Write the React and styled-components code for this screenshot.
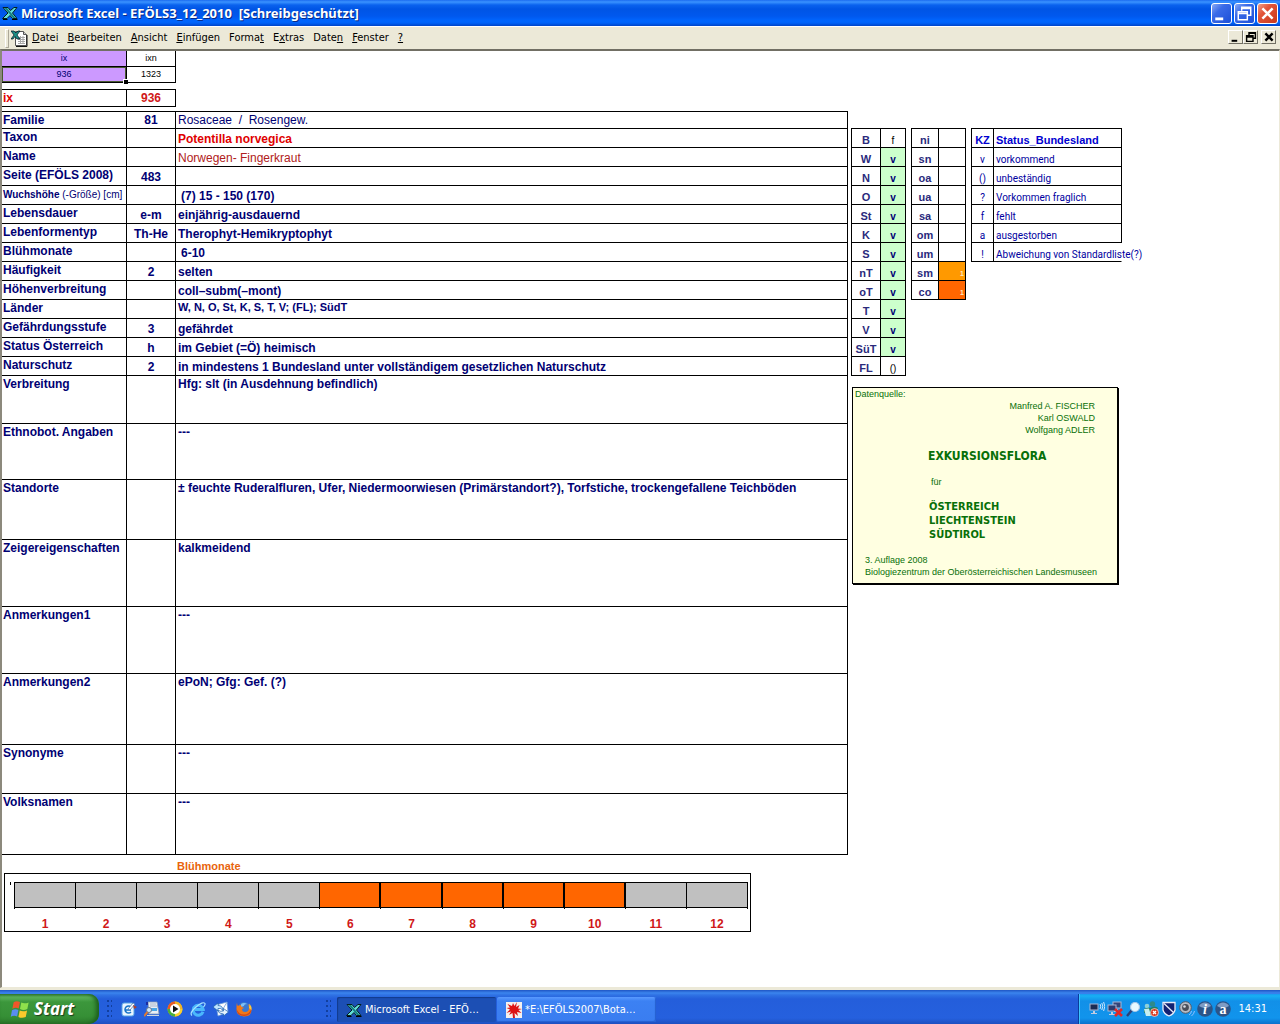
import React from "react";
import styled, { createGlobalStyle, css } from "styled-components";

const ui = `"DejaVu Sans Condensed", "DejaVu Sans", sans-serif`;
const sheet = `"Liberation Sans", Arial, sans-serif`;
const navy = "#000073";

const Global = createGlobalStyle`
  * { box-sizing: border-box; }
  body { margin: 0; background: #fff; font-family: ${sheet}; }
  button { font: inherit; color: inherit; border: 0; padding: 0; background: none; cursor: default; }
  svg { display: block; flex: none; }
`;

const Desktop = styled.div`
  display: flex;
  flex-direction: column;
  min-height: 100vh;
  background: #ece9d8;
`;

/* ---------- window frame ---------- */
const TitleBar = styled.header`
  display: flex;
  align-items: center;
  gap: 3px;
  height: 26px;
  padding: 0 2px 0 2px;
  color: #fff;
  background: linear-gradient(#1c6cf0 0, #3a93ff 2px, #0a62ee 5px, #0055e5 9px, #0058ee 16px, #0066ff 21px, #0062f8 23px, #0044c8 26px);
`;
const Title = styled.h1`
  flex: 1;
  margin: 0;
  font: bold 13px/24px "Noto Sans", "Open Sans", sans-serif;
  white-space: pre;
  text-shadow: 1px 1px #0a2a86;
`;
const WinButtons = styled.div`
  display: flex;
  gap: 2px;
`;
const WinButton = styled.button`
  display: grid;
  place-items: center;
  width: 21px;
  height: 21px;
  border: 1px solid #fff;
  border-radius: 3px;
  background: ${(p) =>
    p.$close
      ? "linear-gradient(135deg, #f0a088, #e2553a 35%, #c8381a)"
      : "linear-gradient(135deg, #8aaaf5, #3a6be8 35%, #1c4fd8)"};
`;

const MenuBar = styled.nav`
  display: flex;
  align-items: center;
  height: 23px;
  padding: 0 4px 0 5px;
  background: #ece9d8;
  border-top: 1px solid #fff;
`;
const Grip = styled.span`
  width: 4px;
  height: 19px;
  margin-right: 2px;
  border: 1px solid #aca899;
  border-top-color: #fff;
  border-left-color: #fff;
`;
const MenuList = styled.div`
  display: flex;
  flex: 1;
  gap: 9px;
  padding-left: 4px;
`;
const MenuItem = styled.button`
  font: 11px/20px ${ui};
  color: #000;
`;
const DocButtons = styled.div`
  display: flex;
  padding-bottom: 2px;
`;
const DocButton = styled.button`
  display: grid;
  place-items: center;
  width: 15px;
  height: 14px;
  margin-left: ${(p) => (p.$apart ? 3 : 0)}px;
  background: #ece9d8;
  border: 1px solid;
  border-color: #fff #716f64 #716f64 #fff;
`;

/* ---------- worksheet ---------- */
const Sheet = styled.main`
  flex: 1;
  display: flex;
  align-items: flex-start;
  gap: 3px;
  background: #fff;
  border: solid;
  border-width: 2px 1px 1px 2px;
  border-color: #716f64 #ece9d8 #ece9d8 #8c897c;
  margin-bottom: 2px;
`;
const Left = styled.div`
  display: flex;
  flex-direction: column;
  align-items: flex-start;
`;
const Grid = styled.table`
  table-layout: fixed;
  border-collapse: separate;
  border-spacing: 0;
  width: ${(p) => p.$w}px;
  margin-top: ${(p) => p.$gap || 0}px;
  border-top: ${(p) => (p.$open ? 0 : 1)}px solid #000;
  border-left: ${(p) => (p.$framed ? 1 : 0)}px solid #000;
  color: ${navy};
  font: bold 12px/15px ${sheet};

  th, td {
    padding: 0 2px;
    border: solid #000;
    border-width: 0 1px 1px 0;
    text-align: left;
    vertical-align: top;
    white-space: pre;
  }
`;
const Row = styled.tr`
  height: ${(p) => p.$h}px;
`;
const Label = styled.th`
  && { font-size: ${(p) => (p.$small ? 10 : 12)}px; padding: 1px 0 0 1px; ${(p) => p.$red && "color: #e00000;"} }
`;
const Plain = styled.span`
  font-weight: normal;
`;
const Code = styled.td`
  && { text-align: center; vertical-align: bottom; ${(p) => p.$red && "color: #d01818;"} }
`;
const looks = {
  plain: css`font-weight: normal;`,
  taxon: css`color: #e00000;`,
  name: css`color: #b02020; font-weight: normal;`,
  small: css`font-size: 11px;`,
};
const Value = styled.td`
  && {
    vertical-align: ${(p) => (p.$top ? "top" : "bottom")};
    padding-top: ${(p) => (p.$tall ? 1 : 0)}px;
    padding-left: ${(p) => (p.$indent ? 5 : 2)}px;
    ${(p) => looks[p.$look]}
  }
`;
const HeadCell = styled.td`
  && {
    height: 16px;
    font: 9px/15px ${sheet};
    text-align: center;
    color: ${(p) => (p.$lilac ? navy : "#000")};
    background: ${(p) => (p.$lilac ? "#cc99ff" : "#fff")};
    ${(p) => p.$selected && "box-shadow: inset 0 0 0 1px #4a5a32; position: relative;"}
  }
  ${(p) =>
    p.$selected &&
    css`
      &::after {
        content: "";
        position: absolute;
        right: -2px;
        bottom: -2px;
        width: 4px;
        height: 4px;
        background: #000;
        border: solid #fff;
        border-width: 1px 0 0 1px;
      }
    `}
`;

/* ---------- flowering months ---------- */
const ChartTitle = styled.h2`
  margin: 4px 0 0 175px;
  font: bold 11px/14px ${sheet};
  color: #e8640c;
`;
const Chart = styled.section`
  display: flex;
  width: 747px;
  height: 59px;
  margin: 0 0 20px 2px;
  padding: 8px 2px 0 5px;
  border: 1px solid #000;
`;
const AxisMark = styled.span`
  width: 1px;
  height: 3px;
  margin-right: 3px;
  background: #000;
`;
const Months = styled.ol`
  flex: 1;
  display: grid;
  grid-template-columns: repeat(12, 1fr);
  height: 27px;
  margin: 0;
  padding: 0;
  list-style: none;
  border-right: 1px solid #000;
`;
const Month = styled.li`
  height: 27px;
  border-left: 1px solid #000;
  color: #d01818;
  font: bold 12px/15px ${sheet};
  text-align: center;
  &::before {
    content: "";
    display: block;
    height: 24px;
    margin-bottom: 9px;
    border: solid #000;
    border-width: 1px ${(p) => (p.$on ? 1 : 0)}px 1px 0;
    background: ${(p) => (p.$on ? "#ff6600" : "#c0c0c0")};
  }
`;

/* ---------- side tables ---------- */
const Side = styled.aside`
  display: flex;
  flex-direction: column;
  align-items: flex-start;
  padding-top: 77px;
`;
const SideTables = styled.div`
  display: flex;
  align-items: flex-start;
  gap: 5px;
`;
const Key = styled.th`
  && {
    font: bold 11px/13px ${sheet};
    text-align: center;
    vertical-align: bottom;
    color: #2a2a7c;
  }
`;
const Mark = styled.td`
  && {
    font: ${(p) => (p.$bg ? "bold" : "normal")} 10px/13px ${sheet};
    text-align: center;
    vertical-align: bottom;
    color: ${(p) => (p.$bg ? navy : "#000")};
    background: ${(p) => p.$bg || "#fff"};
  }
`;
const Heat = styled.td`
  && {
    font: bold 7px/12px ${sheet};
    text-align: right;
    vertical-align: bottom;
    padding: 0 1px;
    color: #ffe9c0;
    background: ${(p) => p.$bg || "#fff"};
  }
`;
const Legend = styled.td`
  && {
    font: ${(p) => (p.$head ? `bold 11px/13px ${sheet}` : `10px/13px Roboto, ${sheet}`)};
    color: ${(p) => (p.$head ? "#0000d0" : "#0000a0")};
    text-align: ${(p) => (p.$mid ? "center" : "left")};
    vertical-align: bottom;
    ${(p) => p.$spill && "border-right-color: transparent;"}
  }
`;

const Source = styled.section`
  display: flex;
  flex-direction: column;
  width: 266px;
  margin: 11px 0 0 1px;
  padding: 0 2px 5px;
  border: 1px solid #000;
  box-shadow: 1px 1px #000;
  background: #ffffe1;
  color: #087008;
  font: 9px/12px ${sheet};
  p { margin: 0; }
`;
const Authors = styled.p`
  text-align: right;
  padding-right: 20px;
`;
const Book = styled.h2`
  margin: 13px 0 12px 73px;
  font: bold 12px/15px ${ui};
`;
const For = styled.p`
  padding: 0 0 12px 76px;
`;
const Lands = styled.p`
  padding: 0 0 12px 74px;
  font: bold 11px/14px ${ui};
`;
const Edition = styled.p`
  padding-left: 10px;
  white-space: nowrap;
`;

/* ---------- taskbar ---------- */
const TaskBar = styled.footer`
  display: flex;
  height: 34px;
  padding-top: 4px;
  color: #fff;
  background: linear-gradient(#1f55c4 0, #3b85ee 3px, #2f72e4 5px, #245edb 9px, #2560de 28px, #1d4fc0 34px);
  font: 11px/16px ${ui};
`;
const Start = styled.button`
  display: flex;
  align-items: center;
  gap: 3px;
  width: 99px;
  padding-left: 10px;
  border-radius: 0 10px 10px 0;
  background: linear-gradient(#3f8a3f 0, #5cb35c 3px, #3c973c 8px, #369036 22px, #2c7a2c 30px);
  box-shadow: inset -3px 0 4px #1d5e1d;
  font: italic bold 17px/24px "Noto Sans", "Open Sans", sans-serif;
  color: #fff;
  text-shadow: 1px 1px 1px #1a3d1a;
`;
const Dots = styled.span`
  width: 5px;
  margin: 6px ${(p) => p.$mr}px 4px ${(p) => p.$ml}px;
  background: radial-gradient(circle at 1px 1px, #123f9e 1px, transparent 1px) 0 0 / 4px 5px;
`;
const Quick = styled.div`
  display: flex;
  align-items: center;
  gap: 7px;
  width: 203px;
`;
const IconButton = styled.button`
  width: 16px;
  height: 16px;
`;
const Tasks = styled.div`
  flex: 1;
  display: flex;
  gap: 1px;
  padding: 3px 0 2px;
`;
const Task = styled.button`
  display: flex;
  align-items: center;
  gap: 3px;
  width: 159px;
  padding-left: 9px;
  border-radius: 2px;
  text-align: left;
  white-space: nowrap;
  background: ${(p) => (p.$active ? "#1c4fb4" : "linear-gradient(#5a9aff, #3c81f3 4px, #3a7df0)")};
  box-shadow: ${(p) => (p.$active ? "inset 1px 1px 1px #123a8c" : "inset -1px -1px 1px #2560d0")};
`;
const Tray = styled.div`
  display: flex;
  align-items: center;
  gap: 2px;
  padding: 0 13px 0 10px;
  border-left: 1px solid #0a3c9c;
  box-shadow: inset 1px 0 #3cc4ff;
  background: linear-gradient(#1a9af0 0, #18b0f4 2px, #1290e8 7px, #1194ec 24px, #0c70cc 30px);
`;
const Clock = styled.time`
  padding-left: 5px;
`;

/* ---------- icons ---------- */
const Icon = ({ children, size = 16 }) => (
  <svg width={size} height={size} viewBox="0 0 16 16" aria-hidden="true">
    {children}
  </svg>
);
const ExcelIcon = () => (
  <Icon>
    <path d="M1 2.500h5l2.500 3L12 2.500h3l-4.500 5.500 4.500 5.500h-4.500L8 10.500l-3 3H.500l5.500-5.500z" fill="#62dcd8" stroke="#04201f" />
    <path d="M2.500 3h2.500l8.500 10H11z" fill="#147f80" />
    <path d="M10 14h5.500v1H10zM1 14h4.500v1H1z" fill="#000" />
  </Icon>
);
const SheetDocIcon = () => (
  <svg width="17" height="17" viewBox="0 0 17 17" aria-hidden="true">
    <path d="M4.500 1.500h8l3 3v11h-11z" fill="#fff" stroke="#555" />
    <path d="M12.500 1.500v3h3" fill="#ccc" stroke="#555" />
    <path d="M7 7.500h7M7 9.500h7M7 11.500h7M7 13.500h7M9.500 6v8M12 6v8" stroke="#a8a8a8" />
    <path d="M16 5v11.500H5" fill="none" stroke="#111" />
    <path d="M0 1h3l2 2 2-2h2L6 5l3 4H6L4 6.500 2 9H0l3-4z" fill="#1b8f86" stroke="#012" strokeWidth=".7" />
  </svg>
);
const FlagIcon = () => (
  <Icon size={21}>
    <path d="M2.800 2.500Q5 1 7.600 2.300L6.600 7.300Q4.200 6 1.800 7.500z" fill="#f0562a" />
    <path d="M8.600 2.700Q11 4 14.200 2.600L13.200 7.700Q10.300 9 7.600 7.700z" fill="#8fe04c" />
    <path d="M1.500 8.600Q4 7 6.400 8.300L5.400 13.300Q3 12 .600 13.500z" fill="#5a8df0" />
    <path d="M7.400 8.800Q10 10.100 13 8.700L12 13.800Q9 15 6.400 13.700z" fill="#fbc92c" />
  </Icon>
);
const DesktopIcon = () => (
  <Icon>
    <rect x="1" y="2" width="12" height="13" rx="2" fill="#e9f5ff" stroke="#57a4e4" />
    <path d="M10 6a3.500 3.500 0 1 0 0 5M4 9h6" fill="none" stroke="#1673c8" strokeWidth="1.600" />
    <path d="M7 8l5-6 2 1-5 6z" fill="#fff" stroke="#3a6ea8" strokeWidth=".7" />
    <path d="M12 4l4 2-3 2z" fill="#b0402a" />
  </Icon>
);
const SearchDocIcon = () => (
  <Icon>
    <path d="M4 1h9l2 12H5z" fill="#e8eef6" stroke="#8b9db5" strokeWidth=".8" />
    <path d="M6 3h6M6 5h7" stroke="#a9b8cc" />
    <path d="M6 7h7v3H6z" fill="#4ba7e6" />
    <path d="M3 14h12v1H3z" fill="#ccd5e0" />
    <circle cx="5" cy="9" r="2.500" fill="#cfeaff" stroke="#6a7890" />
    <path d="M3.500 11L0 15" stroke="#e07a30" strokeWidth="2" />
    <path d="M2 1h2v3H2z" fill="#1a2ca0" />
  </Icon>
);
const PlayerIcon = () => (
  <Icon>
    <circle cx="8" cy="8" r="7.500" fill="#f5a81c" />
    <path d="M8 8V.500A7.500 7.500 0 0 0 .500 8z" fill="#e65a24" />
    <path d="M8 8H.500A7.500 7.500 0 0 0 8 15.500z" fill="#48b03c" />
    <path d="M8 8h7.500A7.500 7.500 0 0 1 8 15.500z" fill="#f8d030" />
    <path d="M8 8V.500A7.500 7.500 0 0 1 15.500 8z" fill="#f0b428" />
    <circle cx="8" cy="8" r="5" fill="#fff" />
    <path d="M6 4.500l5.500 3.500L6 11.500z" fill="#111" />
  </Icon>
);
const IeIcon = () => (
  <Icon>
    <path d="M13 10.800A5 5 0 1 1 13.200 8.500H5" fill="none" stroke="#4ab8fc" strokeWidth="3" />
    <path d="M2 14.500Q-1 12 6 6T15 2.500Q15.500 4 13.500 6" fill="none" stroke="#a8e2ff" strokeWidth="1.200" />
  </Icon>
);
const OutlookIcon = () => (
  <Icon>
    <path d="M3 4l11-3 1 10-10 4z" fill="#fff" stroke="#6a9bd8" strokeWidth=".8" />
    <path d="M3 4l7 4 4-7" fill="none" stroke="#8ab0e0" />
    <path d="M0 6l5-4v2.500q5 0 5 5-2-3-5-2V10z" fill="#bfe4ff" stroke="#155cab" strokeWidth=".7" />
    <path d="M15.500 11l-5 4v-2q-5 0-6-4 3 2 6 1V7.500z" fill="#e4f4ff" stroke="#155cab" strokeWidth=".7" />
  </Icon>
);
const FirefoxIcon = () => (
  <Icon>
    <circle cx="8" cy="7" r="6" fill="#3a78d0" />
    <path d="M5 3q3-2 6 0-3 0-3 2l-3 1z" fill="#7fc0f4" />
    <path d="M1 1.500q0 2.500 1 3.500 1-1 3-1-1 1 1 2l2 1-2 1q0 3 3 3 4 0 4-4 0-2-1-4 3 2 3.500 5Q16 15.500 8 15.500 0 15 .500 8 .300 4 1 1.500z" fill="#f07818" />
    <path d="M.500 8q2 5.500 7.500 5.500 5 0 7.500-5.500-.500 7-7.500 7Q1 15 .500 8z" fill="#d0481c" />
    <path d="M13.500 2.500q2.500 3 2 6.500L13 7z" fill="#fbc83a" />
  </Icon>
);
const SplatIcon = () => (
  <Icon>
    <path d="M0 0h16v16H0z" fill="#f4f0ee" />
    <path d="M6 4l-4.500-2L4 5.500.500 6 4 7.500.500 11 5 9.500 3 13l3.500-2L7 16h2l-.500-5 3.500 3-1-4 4.500 1-3-3L16 7l-4-.500L13.500 3 10 5l1-5-2.500 4L7 1z" fill="#dd1414" />
  </Icon>
);
const pc = (x, y, c = "#1c2c54") => (
  <>
    <rect x={x} y={y} width="8" height="6" fill={c} stroke="#aab6d4" strokeWidth="1" />
    <path d={`M${x + 3} ${y + 7}h2v2H${x + 3}zM${x + 1} ${y + 9}h6v1H${x + 1}z`} fill="#c3cbe0" />
  </>
);
const WirelessIcon = () => (
  <Icon>
    {pc(1, 3)}
    <path d="M11 3q1.500 2 0 5M12.800 2q2 3 0 7M14.600 1q2.500 4 0 9" fill="none" stroke="#e4f2ff" strokeWidth=".9" />
  </Icon>
);
const NoNetIcon = () => (
  <Icon>
    {pc(6, 1, "#33457a")}
    {pc(1, 4, "#2c3c70")}
    <path d="M8 8l7 7M15 8l-7 7" stroke="#e02828" strokeWidth="2.600" />
  </Icon>
);
const LensIcon = () => (
  <Icon>
    <path d="M7 9l-5 6" stroke="#2c3f78" strokeWidth="2.400" />
    <circle cx="10" cy="6" r="4.500" fill="#e8f8ff" stroke="#a8c8e8" strokeWidth="1.200" />
  </Icon>
);
const MessengerIcon = () => (
  <Icon>
    <circle cx="9.500" cy="3" r="2.700" fill="#2f8a8a" />
    <circle cx="4" cy="5" r="2.300" fill="#8fd0d8" />
    <path d="M1 8q4-2 6-1 5-3 8 0l-3 7H3l1-3-3 1z" fill="#278062" />
    <path d="M1 8l5-.500L8 15H3z" fill="#c8eef0" />
    <circle cx="11.500" cy="11.500" r="4" fill="#d83a22" stroke="#fff" strokeWidth=".6" />
    <path d="M10 10l3 3M13 10l-3 3" stroke="#fff" strokeWidth="1.300" />
  </Icon>
);
const ShieldIcon = () => (
  <Icon>
    <path d="M2 1.500h12V9q-1 4-6 6-5-2-6-6z" fill="#122272" stroke="#e8ecf8" strokeWidth="1.300" />
    <path d="M3 2.500l9.500 9" stroke="#e8ecf8" strokeWidth="1.300" />
  </Icon>
);
const SpeakerIcon = () => (
  <Icon>
    <circle cx="6.500" cy="6.500" r="5.800" fill="#b8bcc4" stroke="#565b66" />
    <circle cx="6.500" cy="6.500" r="3.400" fill="#4a4e58" />
    <circle cx="5.500" cy="5.500" r="1.300" fill="#d8dce4" />
    <path d="M10 14q2-1 2.500-4M12.500 15q2.500-2 3-5" fill="none" stroke="#8fc0ff" />
  </Icon>
);
const BallIcon = ({ letter }) => (
  <Icon>
    <circle cx="8" cy="8" r="7.800" fill="#2b5488" />
    <path d="M2 5a7 7 0 0 1 12 0Q8 9 2 5z" fill="#7f9cc4" />
    <text x="8" y="12.500" textAnchor="middle" fill="#fff" fontFamily="Liberation Serif, serif" fontWeight="bold" fontStyle={letter === "i" ? "italic" : "normal"} fontSize="14">
      {letter}
    </text>
  </Icon>
);
const WinGlyph = ({ kind, dark }) => {
  const c = dark ? "#000" : "#fff";
  return (
    <svg width={dark ? 12 : 17} height={dark ? 12 : 17} viewBox="0 0 15 15" aria-hidden="true">
      {kind === "min" && <path d="M2 11h7v2.500H2z" fill={c} />}
      {kind === "max" && (
        <path d="M5 5V2h8v7h-3M5 3h8M2 6h8v7H2zM2 7.500h8" fill="none" stroke={c} strokeWidth={dark ? 1.800 : 1.300} />
      )}
      {kind === "close" && <path d="M3 3l9 9M12 3l-9 9" stroke={c} strokeWidth={dark ? 3 : 2.200} />}
    </svg>
  );
};

/* ---------- data ---------- */
const menus = [
  ["", "D", "atei"],
  ["", "B", "earbeiten"],
  ["", "A", "nsicht"],
  ["", "E", "infügen"],
  ["Forma", "t", ""],
  ["E", "x", "tras"],
  ["Date", "n", ""],
  ["", "F", "enster"],
  ["", "?", ""],
];

const facts = [
  { label: "Familie", code: "81", value: "Rosaceae  /  Rosengew.", h: 17, look: "plain" },
  { label: "Taxon", value: "Potentilla norvegica", look: "taxon" },
  { label: "Name", value: "Norwegen- Fingerkraut", look: "name" },
  { label: "Seite (EFÖLS 2008)", code: "483" },
  { label: "Wuchshöhe", note: " (-Größe) [cm]", value: "(7) 15 - 150 (170)", indent: true },
  { label: "Lebensdauer", code: "e-m", value: "einjährig-ausdauernd" },
  { label: "Lebenformentyp", code: "Th-He", value: "Therophyt-Hemikryptophyt" },
  { label: "Blühmonate", value: "6-10", indent: true },
  { label: "Häufigkeit", code: "2", value: "selten" },
  { label: "Höhenverbreitung", value: "coll–subm(–mont)" },
  { label: "Länder", value: "W, N, O, St, K, S, T, V; (FL); SüdT", top: true, look: "small" },
  { label: "Gefährdungsstufe", code: "3", value: "gefährdet" },
  { label: "Status Österreich", code: "h", value: "im Gebiet (=Ö) heimisch" },
  { label: "Naturschutz", code: "2", value: "in mindestens 1 Bundesland unter vollständigem gesetzlichen Naturschutz" },
  { label: "Verbreitung", value: "Hfg: slt (in Ausdehnung befindlich)", h: 48, top: true },
  { label: "Ethnobot. Angaben", value: "---", h: 56, top: true },
  { label: "Standorte", value: "± feuchte Ruderalfluren, Ufer, Niedermoorwiesen (Primärstandort?), Torfstiche, trockengefallene Teichböden", h: 60, top: true },
  { label: "Zeigereigenschaften", value: "kalkmeidend", h: 67, top: true },
  { label: "Anmerkungen1", value: "---", h: 67, top: true },
  { label: "Anmerkungen2", value: "ePoN; Gfg: Gef. (?)", h: 71, top: true },
  { label: "Synonyme", value: "---", h: 49, top: true },
  { label: "Volksnamen", value: "---", h: 61, top: true },
];

const lands = [
  ["B", "f"], ["W", "v"], ["N", "v"], ["O", "v"], ["St", "v"], ["K", "v"], ["S", "v"],
  ["nT", "v"], ["oT", "v"], ["T", "v"], ["V", "v"], ["SüT", "v"], ["FL", "()"],
];
const zones = [
  ["ni"], ["sn"], ["oa"], ["ua"], ["sa"], ["om"], ["um"], ["sm", "#ff9900"], ["co", "#ff6600"],
];
const legend = [
  ["v", "vorkommend"], ["()", "unbeständig"], ["?", "Vorkommen fraglich"],
  ["f", "fehlt"], ["a", "ausgestorben"], ["!", "Abweichung von Standardliste(?)"],
];
const flowering = [6, 7, 8, 9, 10];

const quick = [
  ["Desktop anzeigen", DesktopIcon],
  ["Suche", SearchDocIcon],
  ["Media Player", PlayerIcon],
  ["Internet Explorer", IeIcon],
  ["Outlook Express", OutlookIcon],
  ["Firefox", FirefoxIcon],
];

export default function App() {
  return (
    <Desktop>
      <Global />
      <TitleBar>
        <ExcelIcon />
        <Title>{"Microsoft Excel - EFÖLS3_12_2010  [Schreibgeschützt]"}</Title>
        <WinButtons>
          <WinButton aria-label="Minimieren"><WinGlyph kind="min" /></WinButton>
          <WinButton aria-label="Wiederherstellen"><WinGlyph kind="max" /></WinButton>
          <WinButton $close aria-label="Schließen"><WinGlyph kind="close" /></WinButton>
        </WinButtons>
      </TitleBar>

      <MenuBar>
        <Grip />
        <SheetDocIcon />
        <MenuList>
          {menus.map(([a, k, b]) => (
            <MenuItem key={a + k + b}>{a}<u>{k}</u>{b}</MenuItem>
          ))}
        </MenuList>
        <DocButtons>
          <DocButton aria-label="Mappe minimieren"><WinGlyph kind="min" dark /></DocButton>
          <DocButton aria-label="Mappe wiederherstellen"><WinGlyph kind="max" dark /></DocButton>
          <DocButton $apart aria-label="Mappe schließen"><WinGlyph kind="close" dark /></DocButton>
        </DocButtons>
      </MenuBar>

      <Sheet>
        <Left>
          <Grid $w={174} $open>
            <colgroup><col width="125" /><col width="49" /></colgroup>
            <tbody>
              <Row $h={16}><HeadCell $lilac>ix</HeadCell><HeadCell>ixn</HeadCell></Row>
              <Row $h={16}><HeadCell $lilac $selected>936</HeadCell><HeadCell>1323</HeadCell></Row>
            </tbody>
          </Grid>
          <Grid $w={174} $gap={6}>
            <colgroup><col width="125" /><col width="49" /></colgroup>
            <tbody>
              <Row $h={17}><Label $red>ix</Label><Code $red>936</Code></Row>
            </tbody>
          </Grid>
          <Grid $w={846} $gap={4}>
            <colgroup><col width="125" /><col width="49" /><col /></colgroup>
            <tbody>
              {facts.map((f) => (
                <Row key={f.label} $h={f.h || 19}>
                  <Label scope="row" $small={!!f.note}>{f.label}{f.note && <Plain>{f.note}</Plain>}</Label>
                  <Code>{f.code}</Code>
                  <Value $look={f.look} $top={f.top} $tall={f.h > 40} $indent={f.indent}>{f.value}</Value>
                </Row>
              ))}
            </tbody>
          </Grid>
          <ChartTitle>Blühmonate</ChartTitle>
          <Chart>
            <AxisMark />
            <Months>
              {Array.from({ length: 12 }, (_, i) => i + 1).map((m) => (
                <Month key={m} $on={flowering.includes(m)}>{m}</Month>
              ))}
            </Months>
          </Chart>
        </Left>

        <Side>
          <SideTables>
            <Grid $w={55} $framed>
              <colgroup><col width="29" /><col width="25" /></colgroup>
              <tbody>
                {lands.map(([k, v]) => (
                  <Row key={k} $h={19}><Key scope="row">{k}</Key><Mark $bg={v === "v" ? "#ccffcc" : undefined}>{v}</Mark></Row>
                ))}
              </tbody>
            </Grid>
            <Grid $w={55} $framed>
              <colgroup><col width="27" /><col width="27" /></colgroup>
              <tbody>
                {zones.map(([k, bg]) => (
                  <Row key={k} $h={19}><Key scope="row">{k}</Key><Heat $bg={bg}>{bg && "1"}</Heat></Row>
                ))}
              </tbody>
            </Grid>
            <Grid $w={151} $framed>
              <colgroup><col width="22" /><col width="128" /></colgroup>
              <tbody>
                <Row $h={19}><Legend as="th" $head $mid>KZ</Legend><Legend as="th" $head>Status_Bundesland</Legend></Row>
                {legend.map(([k, text]) => (
                  <Row key={k} $h={19}><Legend $mid>{k}</Legend><Legend $spill={k === "!"}>{text}</Legend></Row>
                ))}
              </tbody>
            </Grid>
          </SideTables>
          <Source>
            <p>Datenquelle:</p>
            <Authors>Manfred A. FISCHER<br />Karl OSWALD<br />Wolfgang ADLER</Authors>
            <Book>EXKURSIONSFLORA</Book>
            <For>für</For>
            <Lands>ÖSTERREICH<br />LIECHTENSTEIN<br />SÜDTIROL</Lands>
            <Edition>3. Auflage 2008<br />Biologiezentrum der Oberösterreichischen Landesmuseen</Edition>
          </Source>
        </Side>
      </Sheet>

      <TaskBar>
        <Start><FlagIcon />Start</Start>
        <Dots $ml={8} $mr={9} />
        <Quick>
          {quick.map(([name, Glyph]) => (
            <IconButton key={name} aria-label={name}><Glyph /></IconButton>
          ))}
        </Quick>
        <Dots $ml={2} $mr={6} />
        <Tasks>
          <Task $active><ExcelIcon />Microsoft Excel - EFÖ…</Task>
          <Task><SplatIcon />*E:\EFÖLS2007\Bota…</Task>
        </Tasks>
        <Tray>
          <WirelessIcon />
          <NoNetIcon />
          <LensIcon />
          <MessengerIcon />
          <ShieldIcon />
          <SpeakerIcon />
          <BallIcon letter="i" />
          <BallIcon letter="a" />
          <Clock>14:31</Clock>
        </Tray>
      </TaskBar>
    </Desktop>
  );
}
